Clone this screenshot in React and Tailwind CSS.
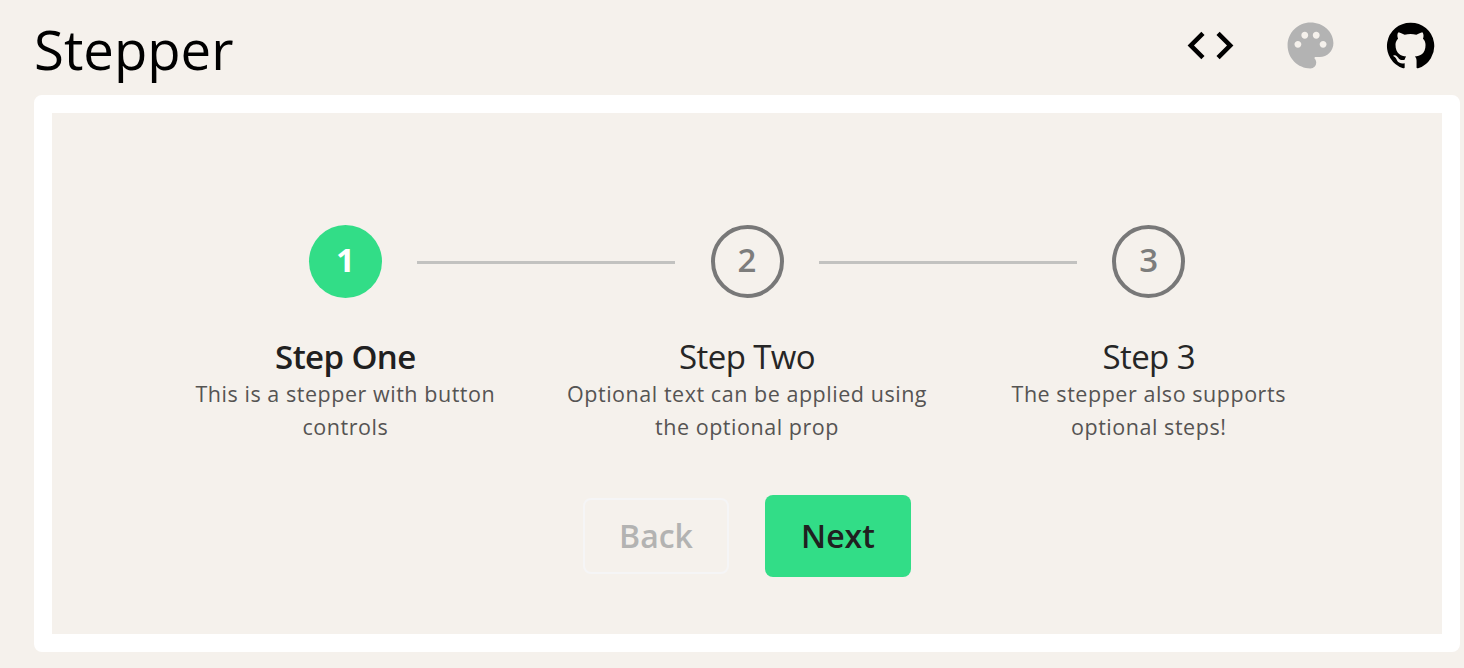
import { MdCode, MdPalette } from "react-icons/md";

const steps = [
  { n: 1, title: "Step One", text: "This is a stepper with button controls" },
  { n: 2, title: "Step Two", text: "Optional text can be applied using the optional prop" },
  { n: 3, title: "Step 3", text: "The stepper also supports optional steps!" },
];

function GitHubMark() {
  return (
    <svg width="51" height="51" viewBox="0 0 24 24" fill="currentColor">
      <path d="M12 1.27a11 11 0 00-3.48 21.46c.55.09.73-.28.73-.55v-1.84c-3.03.64-3.67-1.46-3.67-1.46-.55-1.29-1.28-1.65-1.28-1.65-.92-.65.1-.65.1-.65 1.1 0 1.73 1.1 1.73 1.1.92 1.65 2.57 1.2 3.21.92a2 2 0 01.64-1.47c-2.47-.27-5.04-1.19-5.04-5.5 0-1.1.46-2.1 1.2-2.84a3.76 3.76 0 010-2.93s.91-.28 3.11 1.1c1.8-.49 3.7-.49 5.5 0 2.1-1.38 3.02-1.1 3.02-1.1a3.76 3.76 0 01.1 2.93c.83.74 1.2 1.74 1.2 2.94 0 4.21-2.57 5.13-5.04 5.4.45.37.82.92.82 2.02v3.03c0 .27.1.64.73.55A11 11 0 0012 1.27" />
    </svg>
  );
}

function Step({ step, active, last }) {
  return (
    <li className="flex w-[401.7px] shrink-0 flex-col items-center">
      <div className="relative flex h-[74px] w-full items-center justify-center">
        <span
          className={
            active
              ? "flex size-[73px] items-center justify-center rounded-full bg-[#32dd87] pb-0.5 text-[33px] font-bold text-white"
              : "flex size-[73px] items-center justify-center rounded-full border-4 border-[#787878] pb-0.5 text-[33px] font-semibold text-[#7d7d7c]"
          }
        >
          {step.n}
        </span>
        {!last && <i className="absolute left-[272.8px] top-[37px] h-[3px] w-[258px] bg-[#c2c2c0]" />}
      </div>
      <h2
        className={
          active
            ? "mt-[38px] text-[33px] font-semibold leading-[42px] tracking-[-0.6px] text-[#202020]"
            : "mt-[38px] text-[33px] leading-[42px] tracking-[-0.6px] text-[#262626]"
        }
      >
        {step.title}
      </h2>
      <p className="-mt-px w-[364px] text-center text-[21.5px] leading-[33px] tracking-[0.54px] text-[#555453]">
        {step.text}
      </p>
    </li>
  );
}

export default function App() {
  return (
    <main className="flex h-[668px] w-[1464px] flex-col overflow-hidden bg-[#f5f1ec] pl-[34px] pr-1 font-['Open_Sans',sans-serif]">
      <header className="flex h-[95px] shrink-0 justify-between">
        <h1 className="pt-[11px] text-[54.5px] leading-[76px] text-black">Stepper</h1>
        <div className="mt-[18px] flex h-[55px] items-center gap-[45px] pr-[22px] text-black">
          <MdCode size={55} />
          <MdPalette size={55} className="text-[#b3b3b3]" />
          <div className="flex w-[55px] justify-center pr-px">
            <GitHubMark />
          </div>
        </div>
      </header>
      <section className="flex h-[557px] flex-col rounded-lg border-[18px] border-white pt-[111px]">
        <ol className="flex pl-[92.5px]">
          {steps.map((step, i) => (
            <Step key={step.n} step={step} active={i === 0} last={i === steps.length - 1} />
          ))}
        </ol>
        <div className="mt-[52px] flex items-center justify-center gap-[36px]">
          <button className="h-[76px] w-[146px] rounded-lg border-2 border-[#f5f5f6] text-[32px] font-semibold text-[#b3b3b2]">
            Back
          </button>
          <button className="h-[82px] w-[146px] rounded-lg bg-[#32dd87] text-[32px] font-semibold text-[#202020]">
            Next
          </button>
        </div>
      </section>
    </main>
  );
}
